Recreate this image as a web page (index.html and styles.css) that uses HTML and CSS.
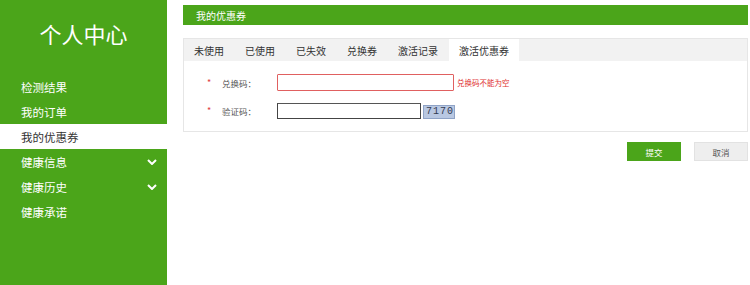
FILE: index.html
```html
<!DOCTYPE html>
<html lang="zh">
<head>
<meta charset="utf-8">
<title>我的优惠券</title>
<link rel="stylesheet" href="styles.css">
</head>
<body>
<div class="page">
  <aside class="sidebar">
    <div class="side-title">个人中心</div>
    <ul class="menu">
      <li class="menu-item">检测结果</li>
      <li class="menu-item">我的订单</li>
      <li class="menu-item active">我的优惠券</li>
      <li class="menu-item">健康信息<svg class="chev" viewBox="0 0 10 6" width="10" height="6"><path d="M1 1 L5 5 L9 1" fill="none" stroke="#fff" stroke-width="2"/></svg></li>
      <li class="menu-item">健康历史<svg class="chev" viewBox="0 0 10 6" width="10" height="6"><path d="M1 1 L5 5 L9 1" fill="none" stroke="#fff" stroke-width="2"/></svg></li>
      <li class="menu-item">健康承诺</li>
    </ul>
  </aside>
  <main class="main">
    <div class="head-bar">我的优惠券</div>
    <div class="card">
      <div class="tabs">
        <span class="tab">未使用</span>
        <span class="tab">已使用</span>
        <span class="tab">已失效</span>
        <span class="tab">兑换券</span>
        <span class="tab">激活记录</span>
        <span class="tab current">激活优惠券</span>
      </div>
      <div class="form">
        <div class="row">
          <span class="star">*</span>
          <span class="label">兑换码：</span>
          <span class="input input-err"></span>
          <span class="err">兑换码不能为空</span>
        </div>
        <div class="row">
          <span class="star">*</span>
          <span class="label">验证码：</span>
          <span class="input input-code"></span>
          <span class="captcha">7170</span>
        </div>
      </div>
    </div>
    <div class="actions">
      <span class="btn btn-ok">提交</span>
      <span class="btn btn-cancel">取消</span>
    </div>
  </main>
</div>
</body>
</html>
```
FILE: styles.css
```css
html, body {
  margin: 0;
  padding: 0;
  background: #fff;
  font-family: "Noto Sans CJK SC", "Noto Sans", sans-serif;
}
.page {
  display: flex;
  min-height: 285px;
}
.sidebar {
  width: 167px;
  background: #4ba51a;
  color: #fff;
  flex: none;
}
.side-title {
  height: 74px;
  display: flex;
  align-items: center;
  justify-content: center;
  font-size: 22px;
  padding-bottom: 8px;
  box-sizing: border-box;
}
.menu {
  list-style: none;
  margin: 0;
  padding: 0;
}
.menu-item {
  height: 25px;
  display: flex;
  align-items: center;
  justify-content: space-between;
  padding: 0 10px 0 21px;
  font-size: 11.5px;
}
.menu-item.active {
  background: #fff;
  color: #333;
}
.chev {
  display: block;
}
.main {
  flex: 1;
  padding: 5px 2px 0 16px;
}
.head-bar {
  height: 20px;
  background: #4ba51a;
  color: #fff;
  font-size: 10px;
  display: flex;
  align-items: center;
  padding-left: 13px;
}
.card {
  margin-top: 13px;
  border: 1px solid #e6e6e6;
}
.tabs {
  display: flex;
  background: #f2f2f2;
  height: 22px;
}
.tab {
  font-size: 10px;
  color: #333;
  padding: 0 10px;
  margin-right: 1px;
  display: flex;
  align-items: center;
}
.tab.current {
  background: #fff;
}
.form {
  padding: 13px 0 12px 0;
}
.row {
  display: flex;
  align-items: center;
  height: 17px;
}
.row + .row {
  margin-top: 11px;
}
.star {
  color: #e04040;
  font-size: 9px;
  width: 38px;
  padding-left: 23px;
  box-sizing: border-box;
}
.label {
  font-size: 8.5px;
  color: #555;
  width: 55px;
}
.input {
  height: 17px;
  box-sizing: border-box;
  background: #fff;
}
.input-err {
  width: 177px;
  border: 1px solid #e06060;
  border-radius: 1px;
}
.input-code {
  width: 144px;
  border: 1px solid #444;
  border-top-color: #555;
  height: 16px;
}
.err {
  color: #e03030;
  font-size: 7.5px;
  margin-left: 3px;
}
.captcha {
  margin-left: 2px;
  background: #b9c8e2;
  border: 1px solid #8fa3c6;
  font-family: "Liberation Mono", monospace;
  font-size: 10px;
  letter-spacing: 1px;
  color: #333a50;
  height: 12px;
  line-height: 12px;
  padding: 0 0 0 2px;
  margin-top: 2px;
}
.actions {
  display: flex;
  justify-content: flex-end;
  margin-top: 10px;
  gap: 13px;
}
.btn {
  width: 54px;
  height: 19px;
  box-sizing: border-box;
  display: flex;
  align-items: center;
  justify-content: center;
  font-size: 8.5px;
}
.btn-ok {
  background: #4ba51a;
  color: #fff;
}
.btn-cancel {
  background: #eeeeee;
  border: 1px solid #e2e2e2;
  color: #555;
}
```
